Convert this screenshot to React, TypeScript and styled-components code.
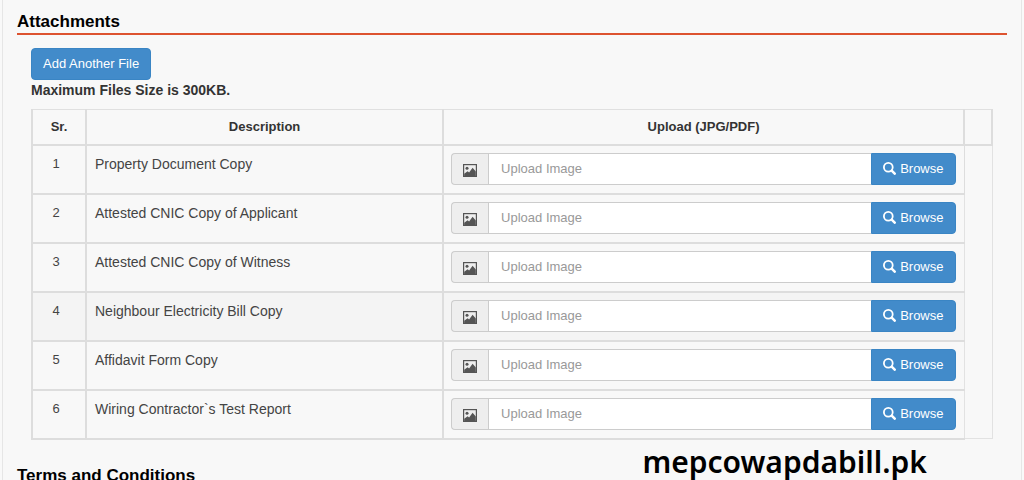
import React from "react";
import styled, { createGlobalStyle } from "styled-components";

const GlobalStyle = createGlobalStyle`
  * { box-sizing: border-box; }
  body {
    margin: 0;
    background: #f9f9f9;
    color: #333;
    font-family: "Liberation Sans", Arial, Helvetica, sans-serif;
    font-size: 13px;
    line-height: 18px;
  }
`;

const Page = styled.div`
  position: relative;
  padding: 0 2px;
`;

const Panel = styled.main`
  border: solid #e6e6e6;
  border-width: 0 1px;
  background: #f8f8f8;
  padding: 12px 14px 0;
`;

const SectionTitle = styled.h2`
  margin: 0;
  padding-bottom: 1px;
  border-bottom: 2px solid #dd5330;
  color: #000;
  font-size: 17px;
  line-height: 20px;
`;

const SectionBody = styled.div`
  padding: 13px 14px 26px;
`;

const Button = styled.button`
  display: inline-flex;
  align-items: center;
  justify-content: center;
  gap: 4px;
  height: 32px;
  padding: 0 11px;
  border: 1px solid #3a85c4;
  border-radius: 4px;
  background: #428bca;
  color: #fff;
  font: inherit;
  cursor: pointer;
`;

const BrowseButton = styled(Button)`
  border-radius: 0 4px 4px 0;
  svg { margin-bottom: 2px; }
`;

const SizeNote = styled.p`
  margin: 1px 0 10px;
  font-size: 14px;
  font-weight: bold;
`;

const Table = styled.table`
  width: 100%;
  table-layout: fixed;
  border-collapse: collapse;
`;

const Column = styled.col<{ $width?: string }>`
  width: ${(p) => p.$width ?? "auto"};
`;

const HeadCell = styled.th`
  height: 35px;
  padding: 0 8px;
  border: 2px solid #ddd;
  border-top: 1px solid #e0e0e0;
`;

const Row = styled.tr<{ $active?: boolean }>`
  height: 49px;
  background: ${(p) => (p.$active ? "#f4f4f4" : "transparent")};
`;

const Cell = styled.td<{ $center?: boolean }>`
  padding: 9px 8px 0;
  border: 2px solid #ddd;
  vertical-align: top;
  color: #444;
  font-size: ${(p) => (p.$center ? "13px" : "14px")};
  text-align: ${(p) => (p.$center ? "center" : "left")};
  ${(p) => p.$center && "padding-right: 14px;"}
`;

const UploadCell = styled.td`
  padding: 0 8px 0 7px;
  border: 2px solid #ddd;
  border-right: 1px solid #ddd;
`;

const SpareCell = styled.td`
  border: 1px solid #e2e2e2;
  background: #f8f8f8;
`;

const InputGroup = styled.div`
  display: flex;
  height: 32px;
`;

const Addon = styled.span`
  display: flex;
  align-items: center;
  justify-content: center;
  width: 37px;
  padding-top: 3px;
  border: 1px solid #ccc;
  border-right: 0;
  border-radius: 4px 0 0 4px;
  background: #eee;
`;

const FileName = styled.input`
  flex: 1;
  min-width: 0;
  padding: 0 12px;
  border: 1px solid #ccc;
  border-right: 0;
  border-radius: 0;
  background: #fff;
  color: #555;
  font: inherit;
  &::placeholder { color: #999; opacity: 1; }
`;

const SiteMark = styled.div`
  position: absolute;
  top: 442px;
  right: 97px;
  color: #000;
  font-family: "Noto Sans", "Open Sans", sans-serif;
  font-size: 30px;
  font-weight: 600;
  line-height: 40px;
`;

const PictureIcon = () => (
  <svg width="14" height="13" viewBox="0 0 14 13" aria-hidden="true">
    <rect x="0.6" y="0.6" width="12.8" height="11.8" fill="#eee" stroke="#555" strokeWidth="1.2" />
    <circle cx="4" cy="4.2" r="1.5" fill="#555" />
    <path d="M1.2 12V9.8L4.6 7.2l1.5 1.2L9.6 3.8l3.2 3.6V12z" fill="#555" />
  </svg>
);

const SearchIcon = () => (
  <svg width="13" height="13" viewBox="0 0 13 13" fill="none" stroke="#fff" aria-hidden="true">
    <circle cx="5.3" cy="5.3" r="4.4" strokeWidth="1.8" />
    <path d="M8.7 8.7l3 3" strokeWidth="2.5" strokeLinecap="round" />
  </svg>
);

const documents = [
  "Property Document Copy",
  "Attested CNIC Copy of Applicant",
  "Attested CNIC Copy of Witness",
  "Neighbour Electricity Bill Copy",
  "Affidavit Form Copy",
  "Wiring Contractor`s Test Report",
];

export default function App() {
  return (
    <Page>
      <GlobalStyle />
      <Panel>
        <SectionTitle>Attachments</SectionTitle>
        <SectionBody>
          <Button type="button">Add Another File</Button>
          <SizeNote>Maximum Files Size is 300KB.</SizeNote>
          <Table>
            <colgroup>
              <Column $width="54px" />
              <Column $width="37.2%" />
              <Column />
              <Column $width="28px" />
            </colgroup>
            <thead>
              <tr>
                <HeadCell scope="col">Sr.</HeadCell>
                <HeadCell scope="col">Description</HeadCell>
                <HeadCell scope="col">Upload (JPG/PDF)</HeadCell>
                <HeadCell as="td" />
              </tr>
            </thead>
            <tbody>
              {documents.map((name, i) => (
                <Row key={name} $active={i === 3}>
                  <Cell $center>{i + 1}</Cell>
                  <Cell>
                    <label htmlFor={`file-${i}`}>{name}</label>
                  </Cell>
                  <UploadCell>
                    <InputGroup>
                      <Addon>
                        <PictureIcon />
                      </Addon>
                      <FileName id={`file-${i}`} type="text" placeholder="Upload Image" />
                      <BrowseButton type="button">
                        <SearchIcon />
                        Browse
                      </BrowseButton>
                    </InputGroup>
                  </UploadCell>
                  {i === 0 && <SpareCell rowSpan={documents.length} />}
                </Row>
              ))}
            </tbody>
          </Table>
        </SectionBody>
        <SectionTitle>Terms and Conditions</SectionTitle>
      </Panel>
      <SiteMark>mepcowapdabill.pk</SiteMark>
    </Page>
  );
}
